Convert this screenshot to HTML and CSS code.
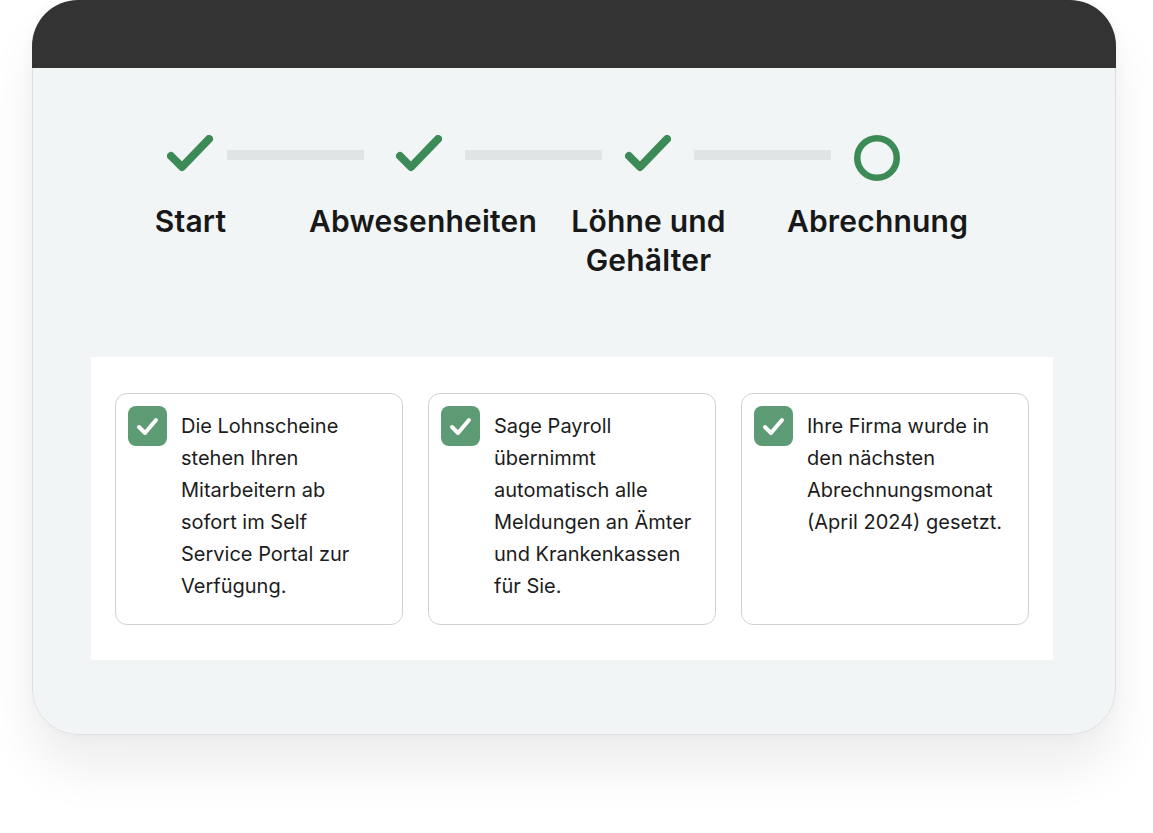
FILE: index.html
```html
<!DOCTYPE html>
<html lang="de">
<head>
<meta charset="utf-8">
<title>Abrechnung</title>
<link rel="stylesheet" href="styles.css">
</head>
<body>
<div class="window">
  <div class="titlebar"></div>
  <div class="content">
    <div class="stepper">
      <svg class="step-icon" viewBox="0 0 46 46" width="46" height="46"><path d="M4 21 L15 32 L42 4" fill="none" stroke="#3c8a56" stroke-width="8" stroke-linecap="round" stroke-linejoin="round"/></svg>
      <div class="step-line step-line-first"></div>
      <svg class="step-icon" viewBox="0 0 46 46" width="46" height="46"><path d="M4 21 L15 32 L42 4" fill="none" stroke="#3c8a56" stroke-width="8" stroke-linecap="round" stroke-linejoin="round"/></svg>
      <div class="step-line"></div>
      <svg class="step-icon" viewBox="0 0 46 46" width="46" height="46"><path d="M4 21 L15 32 L42 4" fill="none" stroke="#3c8a56" stroke-width="8" stroke-linecap="round" stroke-linejoin="round"/></svg>
      <div class="step-line"></div>
      <svg class="step-icon step-circle" viewBox="0 0 46 46" width="46" height="46"><circle cx="23" cy="23" r="19.75" fill="none" stroke="#3c8a56" stroke-width="6.5"/></svg>
    </div>
    <div class="step-labels">
      <div class="step-label">Start</div>
      <div class="step-label">Abwesenheiten</div>
      <div class="step-label">Löhne und Gehälter</div>
      <div class="step-label">Abrechnung</div>
    </div>
    <div class="panel">
      <div class="card">
        <span class="checkbox"><svg viewBox="0 0 39 40" width="39" height="40"><path d="M11 21 L17 27 L28 14" fill="none" stroke="#fff" stroke-width="4" stroke-linecap="round" stroke-linejoin="round"/></svg></span>
        <p class="card-text">Die Lohnscheine stehen Ihren Mitarbeitern ab sofort im Self Service Portal zur Verfügung.</p>
      </div>
      <div class="card">
        <span class="checkbox"><svg viewBox="0 0 39 40" width="39" height="40"><path d="M11 21 L17 27 L28 14" fill="none" stroke="#fff" stroke-width="4" stroke-linecap="round" stroke-linejoin="round"/></svg></span>
        <p class="card-text">Sage Payroll übernimmt automatisch alle Meldungen an Ämter und Krankenkassen für Sie.</p>
      </div>
      <div class="card">
        <span class="checkbox"><svg viewBox="0 0 39 40" width="39" height="40"><path d="M11 21 L17 27 L28 14" fill="none" stroke="#fff" stroke-width="4" stroke-linecap="round" stroke-linejoin="round"/></svg></span>
        <p class="card-text">Ihre Firma wurde in den nächsten Abrechnungsmonat (April 2024) gesetzt.</p>
      </div>
    </div>
  </div>
</div>
</body>
</html>
```
FILE: styles.css
```css
* { box-sizing: border-box; }

html, body {
  margin: 0;
  padding: 0;
  background: #ffffff;
}

body {
  width: 1153px;
  height: 833px;
  overflow: hidden;
  font-family: Inter, "Noto Sans", "Liberation Sans", sans-serif;
  color: #1b1b1b;
}

.window {
  margin-left: 32px;
  width: 1084px;
  height: 735px;
  border-radius: 46px;
  box-shadow: 0 34px 50px rgba(0, 0, 0, 0.07), 0 0 14px rgba(0, 0, 0, 0.035);
  overflow: hidden;
  display: flex;
  flex-direction: column;
}

.titlebar {
  height: 68px;
  background: #333333;
  flex: 0 0 68px;
}

.content {
  flex: 1;
  background: #f1f5f6;
  border: 1px solid #dcdfe0;
  border-top: none;
  border-radius: 0 0 46px 46px;
  padding-top: 67px;
}

.stepper {
  display: grid;
  grid-template-columns: 58px 137px 58px 137px 58px 137px 58px;
  column-gap: 17px;
  align-items: start;
  margin-left: 128px;
  height: 46px;
}

.step-icon {
  display: block;
  justify-self: center;
}

.step-line {
  margin-top: 15px;
  height: 10px;
  background: #e1e4e5;
}

.step-line-first {
  transform: translateX(-9px);
}

.step-labels {
  display: grid;
  grid-template-columns: repeat(4, 229px);
  margin-left: 43px;
  margin-top: 21px;
}

.step-label {
  text-align: center;
  font-size: 30px;
  line-height: 39px;
  font-weight: 600;
  letter-spacing: 0.2px;
  color: #181818;
  padding: 0 4px;
}

.panel {
  margin-top: 77px;
  margin-left: 58px;
  width: 962px;
  background: #ffffff;
  padding: 36px 24px 35px 24px;
  display: grid;
  grid-template-columns: repeat(3, 288px);
  column-gap: 25px;
}

.card {
  height: 232px;
  border: 1.5px solid #cfd2d3;
  border-radius: 12px;
  padding: 12px 12px 12px 12px;
  display: flex;
  gap: 14px;
  align-items: flex-start;
}

.checkbox {
  flex: 0 0 39px;
  width: 39px;
  height: 40px;
  border-radius: 8px;
  background: #5c9b74;
  display: block;
}

.checkbox svg {
  display: block;
}

.card-text {
  margin: 4px 0 0 0;
  width: 201px;
  font-size: 20px;
  line-height: 32px;
  color: #1c1c1c;
}
```
